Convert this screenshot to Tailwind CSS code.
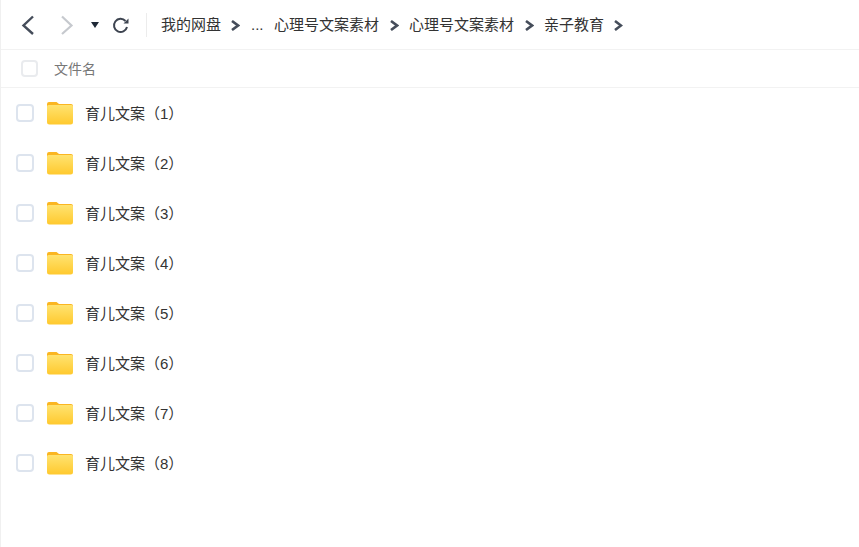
<!DOCTYPE html>
<html lang="zh-CN">
  <head>
    <meta charset="UTF-8" />
    <meta name="viewport" content="width=device-width, initial-scale=1.0" />
    <script src="https://cdn.jsdelivr.net/npm/@tailwindcss/browser@4"></script>
    <title>我的网盘</title>
  </head>
  <body class="bg-white font-['Liberation_Sans','Noto_Sans_CJK_SC',sans-serif] overflow-hidden">
    <svg class="w-0 h-0 block">
      <defs>
        <linearGradient id="folder-front" x1="0" y1="0" x2="0" y2="1">
          <stop offset="0" stop-color="#ffe370" />
          <stop offset="1" stop-color="#ffc92e" />
        </linearGradient>
        <symbol id="folder" viewBox="0 0 26 24">
          <path d="M0 3a2 2 0 0 1 2-2h7.500l2.500 2h12a2 2 0 0 1 2 2v6H0z" fill="#fbb622" />
          <path d="M0 5.500q0-1.500 1.500-1.500h23q1.500 0 1.500 1.500V21a2.500 2.500 0 0 1-2.500 2.500h-21A2.500 2.500 0 0 1 0 21z" fill="url(#folder-front)" />
        </symbol>
      </defs>
    </svg>
    <main class="w-[859px] h-[547px] border-l border-[#f0f0f0] overflow-hidden">
      <!-- toolbar -->
      <header class="flex items-center h-[50px] border-b border-[#f2f2f2] pl-[19px]">
        <svg class="w-[16px] h-[20px]" viewBox="0 0 16 20" fill="none" stroke="#454d5a" stroke-width="2.4"><path d="M13 1.500 3.500 10.500 13 19" /></svg>
        <svg class="w-[16px] h-[20px] ml-[23px]" viewBox="0 0 16 20" fill="none" stroke="#c6c9ce" stroke-width="2.2"><path d="M3 1.500 12.500 10.500 3 19" /></svg>
        <svg class="w-[8px] h-[6px] ml-[16px]" viewBox="0 0 8 6" fill="#1f2937"><path d="M0 0h8L4 6z" /></svg>
        <svg class="w-[18px] h-[18px] ml-[13px]" viewBox="0 0 18 18" fill="none" stroke="#3d4450" stroke-width="2"><path d="M15 11a6.600 6.600 0 1 1-1.500-6" /><path d="M16.500 2.500v5h-5z" fill="#3d4450" stroke="none" /></svg>
        <div class="w-px h-[24px] bg-[#ececec] ml-[16px]"></div>
        <nav class="flex items-center text-[15px] text-[#333] ml-[14px] pt-px">
          <span class="w-[60px]">我的网盘</span>
          <svg class="w-[9px] h-[11px] ml-[10px] mr-[11px]" viewBox="0 0 9 11" fill="none" stroke="#454d5a" stroke-width="2.600"><path d="M1 1l6 4.500-6 4.500" /></svg>
          <span class="w-[23px]">...</span>
          <span>心理号文案素材</span>
          <svg class="w-[9px] h-[11px] ml-[11px] mr-[10px]" viewBox="0 0 9 11" fill="none" stroke="#454d5a" stroke-width="2.600"><path d="M1 1l6 4.500-6 4.500" /></svg>
          <span>心理号文案素材</span>
          <svg class="w-[9px] h-[11px] ml-[11px] mr-[10px]" viewBox="0 0 9 11" fill="none" stroke="#454d5a" stroke-width="2.600"><path d="M1 1l6 4.500-6 4.500" /></svg>
          <span>亲子教育</span>
          <svg class="w-[9px] h-[11px] ml-[10px]" viewBox="0 0 9 11" fill="none" stroke="#454d5a" stroke-width="2.600"><path d="M1 1l6 4.500-6 4.500" /></svg>
        </nav>
      </header>

      <!-- column header -->
      <div class="flex items-center h-[38px] border-b border-[#f2f2f2] pl-[20px]">
        <span class="w-[17px] h-[17px] rounded-[4px] border-2 border-[#e9ebee]"></span>
        <span class="ml-[16px] text-[14px] text-[#777] pt-[2px]">文件名</span>
      </div>

      <!-- file rows -->
      <ul>
        <li class="flex items-center h-[50px] pl-[15px]">
          <span class="w-[18px] h-[18px] rounded-[4px] border-2 border-[#dde4ee]"></span>
          <svg class="w-[26px] h-[24px] ml-[13px]"><use href="#folder" /></svg>
          <span class="ml-[12px] text-[15px] text-[#333] pt-[2px]">育儿文案（1）</span>
        </li>
        <li class="flex items-center h-[50px] pl-[15px]">
          <span class="w-[18px] h-[18px] rounded-[4px] border-2 border-[#dde4ee]"></span>
          <svg class="w-[26px] h-[24px] ml-[13px]"><use href="#folder" /></svg>
          <span class="ml-[12px] text-[15px] text-[#333] pt-[2px]">育儿文案（2）</span>
        </li>
        <li class="flex items-center h-[50px] pl-[15px]">
          <span class="w-[18px] h-[18px] rounded-[4px] border-2 border-[#dde4ee]"></span>
          <svg class="w-[26px] h-[24px] ml-[13px]"><use href="#folder" /></svg>
          <span class="ml-[12px] text-[15px] text-[#333] pt-[2px]">育儿文案（3）</span>
        </li>
        <li class="flex items-center h-[50px] pl-[15px]">
          <span class="w-[18px] h-[18px] rounded-[4px] border-2 border-[#dde4ee]"></span>
          <svg class="w-[26px] h-[24px] ml-[13px]"><use href="#folder" /></svg>
          <span class="ml-[12px] text-[15px] text-[#333] pt-[2px]">育儿文案（4）</span>
        </li>
        <li class="flex items-center h-[50px] pl-[15px]">
          <span class="w-[18px] h-[18px] rounded-[4px] border-2 border-[#dde4ee]"></span>
          <svg class="w-[26px] h-[24px] ml-[13px]"><use href="#folder" /></svg>
          <span class="ml-[12px] text-[15px] text-[#333] pt-[2px]">育儿文案（5）</span>
        </li>
        <li class="flex items-center h-[50px] pl-[15px]">
          <span class="w-[18px] h-[18px] rounded-[4px] border-2 border-[#dde4ee]"></span>
          <svg class="w-[26px] h-[24px] ml-[13px]"><use href="#folder" /></svg>
          <span class="ml-[12px] text-[15px] text-[#333] pt-[2px]">育儿文案（6）</span>
        </li>
        <li class="flex items-center h-[50px] pl-[15px]">
          <span class="w-[18px] h-[18px] rounded-[4px] border-2 border-[#dde4ee]"></span>
          <svg class="w-[26px] h-[24px] ml-[13px]"><use href="#folder" /></svg>
          <span class="ml-[12px] text-[15px] text-[#333] pt-[2px]">育儿文案（7）</span>
        </li>
        <li class="flex items-center h-[50px] pl-[15px]">
          <span class="w-[18px] h-[18px] rounded-[4px] border-2 border-[#dde4ee]"></span>
          <svg class="w-[26px] h-[24px] ml-[13px]"><use href="#folder" /></svg>
          <span class="ml-[12px] text-[15px] text-[#333] pt-[2px]">育儿文案（8）</span>
        </li>
      </ul>
    </main>
  </body>
</html>
